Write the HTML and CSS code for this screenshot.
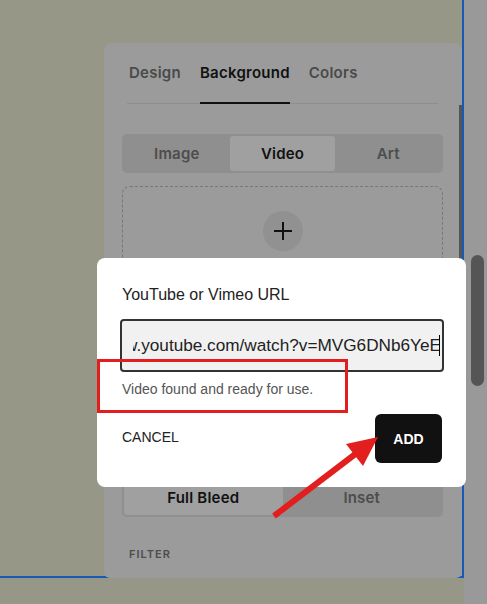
FILE: index.html
```html
<!DOCTYPE html>
<html lang="en">

<head>
  <meta charset="UTF-8" />
  <meta name="viewport" content="width=device-width, initial-scale=1.0" />
  <title>Background video</title>
  <link rel="stylesheet" href="styles.css">
</head>

<body>
  <div class="page">
    <div class="canvas">
      <div class="panel">
        <div class="tabs">
          <div class="tab">Design</div>
          <div class="tab active">Background</div>
          <div class="tab">Colors</div>
        </div>
        <div class="panel-body">
          <div class="segmented">
            <div class="seg">Image</div>
            <div class="seg active">Video</div>
            <div class="seg">Art</div>
          </div>
          <div class="dropzone">
            <div class="add-circle">
              <svg width="20" height="20" viewBox="0 0 20 20">
                <path d="M10 1v18M1 10h18" stroke="#111" stroke-width="2" fill="none" />
              </svg>
            </div>
          </div>
          <div class="segmented">
            <div class="seg active">Full Bleed</div>
            <div class="seg">Inset</div>
          </div>
          <div class="section-label">FILTER</div>
        </div>
        <div class="panel-thumb"></div>
      </div>
    </div>
    <div class="scroll-strip">
      <div class="thumb"></div>
    </div>

    <div class="dialog">
      <div class="dialog-title">YouTube or Vimeo URL</div>
      <div class="url-field">
        <div class="url-scroll">
          <span>https://www.youtube.com/watch?v=MVG6DNb6YeE</span><span class="caret"></span>
        </div>
      </div>
      <div class="hint">Video found and ready for use.</div>
      <div class="actions">
        <span class="cancel">CANCEL</span>
        <button class="add-btn">ADD</button>
      </div>
    </div>

    <!-- annotation drawn over the screenshot -->
    <svg class="marks" width="487" height="604" viewBox="0 0 487 604">
      <rect x="98.5" y="360.5" width="248" height="51" fill="none" stroke="#e31e1e" stroke-width="3" />
      <line x1="274" y1="516" x2="358" y2="452" stroke="#e31e1e" stroke-width="6" />
      <polygon points="378,437 346,444 363,466" fill="#e31e1e" />
    </svg>
  </div>
</body>

</html>
```

FILE: styles.css
```css
body {
  margin: 0;
  background: #979787;
  font-family: Inter, "Noto Sans", sans-serif;
  color: #111;
}

.page {
  position: relative;
  display: flex;
  width: 487px;
  height: 604px;
  overflow: hidden;
}

.canvas {
  box-sizing: border-box;
  width: 464px;
  height: 578px;
  padding: 43px 0 0 104px;
  border-right: 2px solid #1a58b5;
  border-bottom: 2px solid #1a58b5;
  display: flex;
  flex-direction: column;
}

.panel {
  position: relative;
  flex: 1;
  margin-bottom: -2px;
  background: #9b9b9b;
  border-radius: 8px 8px 6px 6px;
}

.tabs {
  display: flex;
  gap: 19px;
  margin: 0 24px 0 23px;
  padding-left: 2px;
  border-bottom: 1px solid #8e8e8e;
}

.tab {
  padding: 20px 0 19px;
  line-height: 20px;
  font-size: 15px;
  font-weight: 600;
  letter-spacing: 0.25px;
  color: #4a4a4a;
  border-bottom: 2px solid transparent;
  margin-bottom: -1px;
}

.tab.active {
  color: #111;
  border-bottom-color: #111;
}

.panel-body {
  padding: 30px 19px 0 18px;
}

.segmented {
  display: flex;
  height: 39px;
  box-sizing: border-box;
  padding: 2px;
  background: #8f8f8f;
  border-radius: 5px;
}

.seg {
  flex: 1;
  display: flex;
  align-items: center;
  justify-content: center;
  padding-bottom: 1px;
  font-size: 15px;
  font-weight: 600;
  letter-spacing: 0.2px;
  color: #4d4d4d;
  border-radius: 3px;
}

.seg.active {
  background: #a0a0a0;
  color: #111;
}

.dropzone {
  height: 270px;
  margin: 13px 0 20px;
  border: 1px dashed #777;
  border-radius: 8px;
  display: flex;
  justify-content: center;
}

.add-circle {
  width: 40px;
  height: 40px;
  margin-top: 24px;
  border-radius: 50%;
  background: #919191;
  display: flex;
  align-items: center;
  justify-content: center;
}

.section-label {
  margin: 30px 0 0 7px;
  font-size: 11px;
  line-height: 14px;
  font-weight: 600;
  letter-spacing: 1px;
  color: #4d4d4d;
}

.panel-thumb {
  position: absolute;
  top: 62px;
  right: 0;
  width: 3px;
  height: 200px;
  background: #555;
}

.scroll-strip {
  flex: 1;
  background: #999;
}

.scroll-strip .thumb {
  width: 13px;
  height: 131px;
  margin: 255px 0 0 7px;
  background: #555;
  border-radius: 7px;
}

.dialog {
  position: absolute;
  left: 97px;
  top: 258px;
  width: 369px;
  height: 229px;
  box-sizing: border-box;
  padding: 27px 22px 0 23px;
  background: #fff;
  border-radius: 8px;
  font-family: "Liberation Sans", Arial, sans-serif;
}

.dialog-title {
  padding-left: 2px;
  font-size: 16px;
  line-height: 20px;
  color: #222;
}

.url-field {
  margin-top: 14px;
  height: 53px;
  box-sizing: border-box;
  padding: 0 2px 0 11px;
  border: 2px solid #333;
  border-radius: 4px;
  background: #f1f1f1;
  display: flex;
}

.url-scroll {
  flex: 1;
  display: flex;
  align-items: center;
  justify-content: flex-end;
  overflow: hidden;
  white-space: nowrap;
  font-size: 17.2px;
  color: #222;
}

.caret {
  flex: none;
  width: 1px;
  height: 21px;
  margin-left: -2px;
  background: #000;
}

.hint {
  margin-top: 8px;
  padding-left: 2px;
  font-size: 14px;
  line-height: 18px;
  color: #555;
}

.actions {
  margin: 16px 2px 0 2px;
  display: flex;
  align-items: center;
  justify-content: space-between;
}

.cancel {
  font-size: 14px;
  color: #222;
  margin-top: -4px;
}

.add-btn {
  width: 67px;
  height: 49px;
  border: none;
  border-radius: 6px;
  background: #111;
  color: #fff;
  font-family: "Liberation Sans", Arial, sans-serif;
  font-size: 14px;
  font-weight: 700;
}

.marks {
  position: absolute;
  left: 0;
  top: 0;
  pointer-events: none;
}
```
